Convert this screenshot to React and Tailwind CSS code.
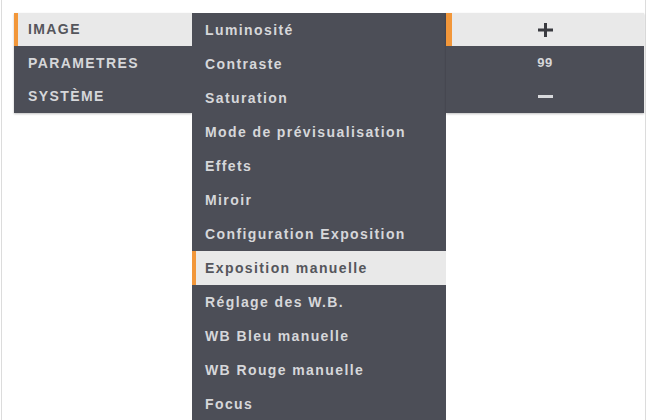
import React from "react";

const font = { fontFamily: '"Liberation Sans", Arial, sans-serif' };

const left = ["IMAGE", "PARAMETRES", "SYSTÈME"];
const middle = [
  "Luminosité",
  "Contraste",
  "Saturation",
  "Mode de prévisualisation",
  "Effets",
  "Miroir",
  "Configuration Exposition",
  "Exposition manuelle",
  "Réglage des W.B.",
  "WB Bleu manuelle",
  "WB Rouge manuelle",
  "Focus",
];

function Row({ label, active, pad, h }) {
  return (
    <div
      className={`flex items-center ${h} ${pad} text-[14px] font-bold tracking-[1.4px] ${
        active ? "bg-[#e9e9e9] text-[#55565c] border-l-4 border-[#f2973a]" : "text-[#d6d7da]"
      }`}
    >
      <span className={active ? "-ml-[4px]" : ""}>{label}</span>
    </div>
  );
}

export default function App() {
  return (
    <div className="w-[648px] h-[420px] bg-white pl-[1px] overflow-hidden" style={font}>
      <div className="h-full w-[645px] border-x border-[#dcdcdc] pl-[12px] pt-[13px] flex items-start">
        <div className="w-[178px] bg-[#4c4e57] shadow-[0_1px_2px_rgba(0,0,0,0.25)]">
          {left.map((l, i) => (
            <Row key={l} label={l} active={i === 0} pad="pl-[14px]" h="h-[33.4px]" />
          ))}
        </div>
        <div className="w-[254px] bg-[#4c4e57]">
          {middle.map((l, i) => (
            <Row key={l} label={l} active={i === 7} pad="pl-[13px]" h="h-[34px]" />
          ))}
        </div>
        <div className="w-[198px] bg-[#4c4e57] shadow-[0_1px_2px_rgba(0,0,0,0.25)]">
          <div className="h-[33.4px] flex items-center justify-center bg-[#e9e9e9] border-l-[6px] border-[#f2973a]">
            <svg width="15" height="14" viewBox="0 0 15 14" className="-ml-[6px]">
              <rect x="0" y="5.5" width="15" height="3" fill="#3a3b40" />
              <rect x="6" y="0" width="3" height="14" fill="#3a3b40" />
            </svg>
          </div>
          <div className="h-[33.4px] flex items-center justify-center text-[13px] font-bold tracking-[0.5px] text-[#d6d7da]">
            99
          </div>
          <div className="h-[33.4px] flex items-center justify-center">
            <div className="w-[15px] h-[3px] bg-[#d8d9dc]" />
          </div>
        </div>
      </div>
    </div>
  );
}
